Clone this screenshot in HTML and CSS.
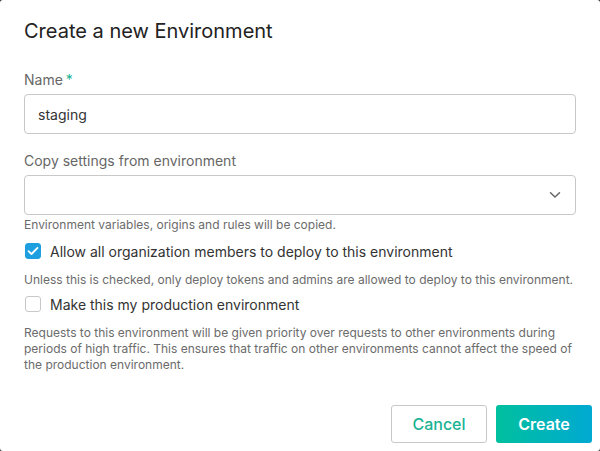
FILE: index.html
```html
<!DOCTYPE html>
<html>
<head>
<meta charset="utf-8">
<link rel="stylesheet" href="styles.css">
</head>
<body>
<div class="dialog">
  <h1 class="title">Create a new Environment</h1>
  <div class="content">
    <div class="field">
      <label class="label">Name<span class="req">*</span></label>
      <div class="input">staging</div>
    </div>
    <div class="field field-copy">
      <label class="label">Copy settings from environment</label>
      <div class="input select">
        <svg class="chev" width="12" height="8" viewBox="0 0 12 8"><path d="M1.5 1.8 L6 6 L10.5 1.8" fill="none" stroke="#666" stroke-width="1.5" stroke-linecap="round" stroke-linejoin="round"/></svg>
      </div>
      <p class="help help-tight">Environment variables, origins and rules will be copied.</p>
    </div>
    <div class="check-row first">
      <span class="box checked"><svg width="12" height="10" viewBox="0 0 12 10"><path d="M1.5 5.2 L4.5 8 L10.5 1.8" fill="none" stroke="#fff" stroke-width="1.8" stroke-linecap="round" stroke-linejoin="round"/></svg></span>
      <span class="check-label">Allow all organization members to deploy to this environment</span>
    </div>
    <p class="help">Unless this is checked, only deploy tokens and admins are allowed to deploy to this environment.</p>
    <div class="check-row second">
      <span class="box"></span>
      <span class="check-label">Make this my production environment</span>
    </div>
    <p class="help">Requests to this environment will be given priority over requests to other environments during periods of high traffic. This ensures that traffic on other environments cannot affect the speed of the production environment.</p>
  </div>
  <div class="footer">
    <button class="btn btn-cancel">Cancel</button>
    <button class="btn btn-create">Create</button>
  </div>
</div>
</body>
</html>
```

FILE: styles.css
```css
html, body {
  margin: 0;
  padding: 0;
}
body {
  background: #3a3a3a;
  font-family: Inter, "Noto Sans", sans-serif;
  color: #222;
}
.dialog {
  width: 600px;
  height: 451px;
  background: #fff;
  border-radius: 3px;
  display: flex;
  flex-direction: column;
  box-sizing: border-box;
}
.title {
  margin: 0;
  padding: 19px 24px 0;
  font-size: 20px;
  line-height: 24px;
  font-weight: 400;
  color: #222;
}
.content {
  padding: 0 24px;
  flex: 1;
}
.field {
  margin-top: 28px;
}
.field-copy {
  margin-top: 18px;
}
.label {
  display: block;
  font-size: 14px;
  line-height: 17px;
  color: #666;
  margin-bottom: 6px;
}
.req {
  color: #1ab394;
  margin-left: 3px;
}
.input {
  box-sizing: border-box;
  height: 40px;
  border: 1px solid #c8c8c8;
  border-radius: 4px;
  padding: 0 13px;
  display: flex;
  align-items: center;
  font-size: 14px;
  color: #333;
}
.select {
  justify-content: flex-end;
  padding-right: 14px;
}
.help {
  margin: 11px 0 0;
  font-size: 12px;
  line-height: 16px;
  color: #6b6b6b;
}
.help-tight {
  margin-top: 2px;
}
.check-row {
  display: flex;
  align-items: center;
  gap: 9px;
  padding-left: 1px;
  height: 20px;
}
.check-row.first {
  margin-top: 8px;
}
.check-row.second {
  margin-top: 6px;
}
.box {
  box-sizing: border-box;
  width: 16px;
  height: 16px;
  border: 1px solid #c8c8c8;
  border-radius: 3px;
  display: flex;
  align-items: center;
  justify-content: center;
  background: #fff;
}
.box.checked {
  background: #1e9fe0;
  border-color: #1e9fe0;
}
.check-label {
  font-size: 14px;
  color: #333;
}
.footer {
  display: flex;
  justify-content: flex-end;
  gap: 9px;
  padding: 0 8px 8px;
}
.btn {
  box-sizing: border-box;
  width: 96px;
  height: 38px;
  border-radius: 3px;
  font-family: Inter, "Noto Sans", sans-serif;
  font-size: 16px;
  cursor: pointer;
}
.btn-cancel {
  background: #fff;
  border: 1px solid #c8c8c8;
  color: #1ab394;
  font-weight: 500;
}
.btn-create {
  border: none;
  background: linear-gradient(90deg, #00c09e, #00a9d2);
  color: #fff;
  font-weight: 600;
}
```
